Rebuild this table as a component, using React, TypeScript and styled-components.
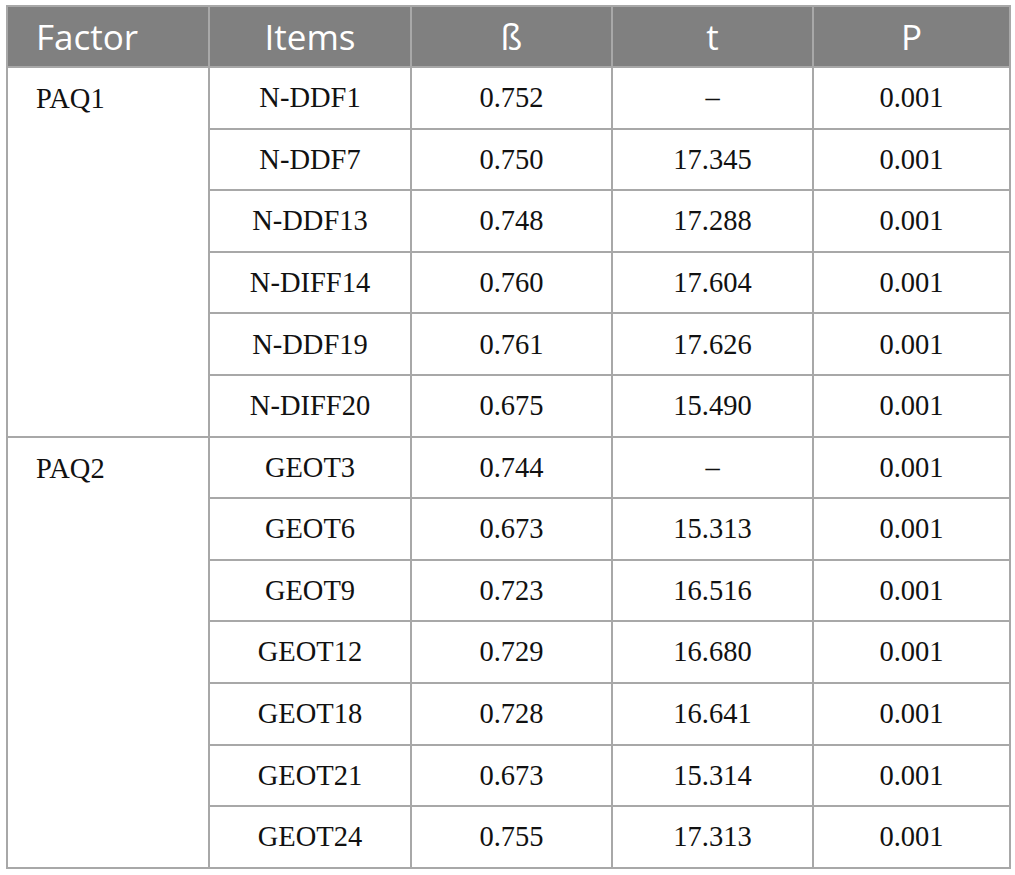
import React from "react";
import styled, { createGlobalStyle } from "styled-components";

const Global = createGlobalStyle`
  html, body { margin: 0; padding: 0; background: #ffffff; }
`;

const Page = styled.div`
  padding: 5px 0 0 6px;
  width: 1015px;
  box-sizing: border-box;
`;

const Table = styled.table`
  border-collapse: collapse;
  width: 1003px;
  table-layout: fixed;
  border: 2px solid #a8a8a8;
`;

const Col = styled.col<{ $w: number }>`
  width: ${(p) => p.$w}px;
`;

const HeadCell = styled.th<{ $align?: "left" | "center" }>`
  background: #808080;
  color: #ffffff;
  font-family: "Open Sans", "DejaVu Sans", sans-serif;
  font-weight: 400;
  font-size: 35px;
  height: 59px;
  padding: ${(p) => (p.$align === "left" ? "0 0 0 28px" : "0")};
  text-align: ${(p) => p.$align ?? "center"};
  border: 2px solid #a8a8a8;
  vertical-align: middle;
  line-height: 1;
`;

const Cell = styled.td<{ $align?: "left" | "center"; $top?: boolean }>`
  font-family: "Liberation Serif", "Times New Roman", serif;
  font-size: 28.5px;
  color: #111111;
  height: 61.6px;
  padding: ${(p) => (p.$top ? "15px 0 0 28px" : "0")};
  text-align: ${(p) => p.$align ?? "center"};
  vertical-align: ${(p) => (p.$top ? "top" : "middle")};
  border: 2px solid #a8a8a8;
  line-height: 1.1;
  box-sizing: border-box;
`;

type Row = [string, string, string, string];

const groups: { factor: string; rows: Row[] }[] = [
  {
    factor: "PAQ1",
    rows: [
      ["N-DDF1", "0.752", "–", "0.001"],
      ["N-DDF7", "0.750", "17.345", "0.001"],
      ["N-DDF13", "0.748", "17.288", "0.001"],
      ["N-DIFF14", "0.760", "17.604", "0.001"],
      ["N-DDF19", "0.761", "17.626", "0.001"],
      ["N-DIFF20", "0.675", "15.490", "0.001"],
    ],
  },
  {
    factor: "PAQ2",
    rows: [
      ["GEOT3", "0.744", "–", "0.001"],
      ["GEOT6", "0.673", "15.313", "0.001"],
      ["GEOT9", "0.723", "16.516", "0.001"],
      ["GEOT12", "0.729", "16.680", "0.001"],
      ["GEOT18", "0.728", "16.641", "0.001"],
      ["GEOT21", "0.673", "15.314", "0.001"],
      ["GEOT24", "0.755", "17.313", "0.001"],
    ],
  },
];

const widths = [202, 202, 201, 201, 197];

export default function App() {
  return (
    <Page>
      <Global />
      <Table>
        <colgroup>
          {widths.map((w, i) => (
            <Col key={i} $w={w} />
          ))}
        </colgroup>
        <thead>
          <tr>
            <HeadCell $align="left">Factor</HeadCell>
            <HeadCell>Items</HeadCell>
            <HeadCell>ß</HeadCell>
            <HeadCell>t</HeadCell>
            <HeadCell>P</HeadCell>
          </tr>
        </thead>
        <tbody>
          {groups.map((g) =>
            g.rows.map((r, i) => (
              <tr key={g.factor + i}>
                {i === 0 && (
                  <Cell $align="left" $top rowSpan={g.rows.length}>
                    {g.factor}
                  </Cell>
                )}
                {r.map((v, j) => (
                  <Cell key={j}>{v}</Cell>
                ))}
              </tr>
            ))
          )}
        </tbody>
      </Table>
    </Page>
  );
}
